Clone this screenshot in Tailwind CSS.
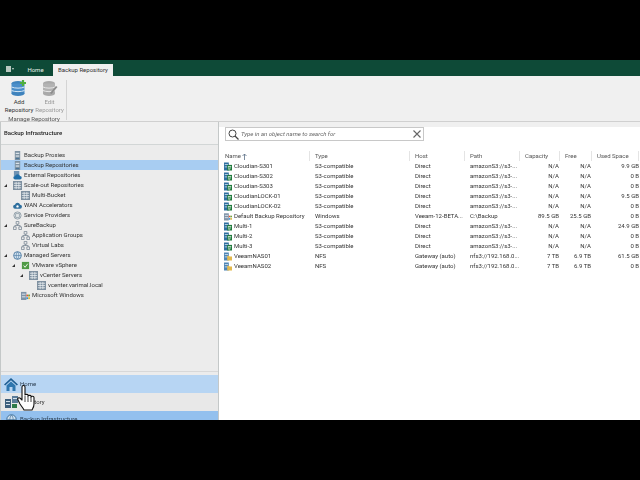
<!DOCTYPE html>
<html lang="en">
<head>
<meta charset="UTF-8">
<title>Backup Repository</title>
<script src="https://cdn.jsdelivr.net/npm/@tailwindcss/browser@4"></script>
</head>
<body class="bg-black overflow-hidden">
<svg class="hidden">
  <symbol id="s3" viewBox="0 0 10 10"><rect x="0" y="0" width="6" height="10" fill="#2f6f9f"/><rect x="1" y="2" width="4" height="1" fill="#cfe3f2"/><rect x="1" y="5" width="4" height="1" fill="#cfe3f2"/><rect x="4" y="3" width="6" height="7" fill="#1f7a3c"/><path d="M5 5h4M6 5v4M8 6l-1 3" stroke="#e4f5e6" stroke-width="0.9" fill="none"/></symbol>
  <symbol id="win" viewBox="0 0 10 10"><rect x="0" y="1" width="6" height="9" fill="#7f93a8"/><rect x="1" y="3" width="4" height="1" fill="#e6edf3"/><rect x="1" y="6" width="4" height="1" fill="#e6edf3"/><rect x="6" y="4" width="2" height="2" fill="#e0562f"/><rect x="8" y="4" width="2" height="2" fill="#6aa842"/><rect x="6" y="7" width="2" height="2" fill="#2f8fd6"/><rect x="8" y="7" width="2" height="2" fill="#e8b830"/></symbol>
  <symbol id="nas" viewBox="0 0 10 10"><rect x="0" y="0" width="6" height="10" fill="#4f86b5"/><rect x="1" y="2" width="4" height="1" fill="#d8e8f4"/><rect x="1" y="5" width="4" height="1" fill="#d8e8f4"/><path d="M4 4h2l1 1h3v5H4z" fill="#e3b94c"/></symbol>
  <symbol id="srv" viewBox="0 0 10 10"><rect x="2" y="0" width="6" height="10" fill="#7f93a3"/><rect x="3" y="2" width="4" height="1.200" fill="#e8eef3"/><rect x="3" y="5" width="4" height="1.200" fill="#e8eef3"/><rect x="3" y="8" width="4" height="1" fill="#3d6d94"/></symbol>
  <symbol id="grid" viewBox="0 0 10 10"><rect x="0" y="0" width="10" height="10" fill="#7d8f9f"/><path d="M1 2.500h8M1 5h8M1 7.500h8M3.500 1v8M6.500 1v8" stroke="#eef2f5" stroke-width="0.8"/></symbol>
  <symbol id="net" viewBox="0 0 10 10"><path d="M3.500 .5h3v3h-3zM.5 6.500h3v3h-3zM6.500 6.500h3v3h-3zM5 3.500v1.500M2 6.500V5h6v1.500" fill="none" stroke="#6f7f8d" stroke-width="0.8"/></symbol>
  <symbol id="cloud" viewBox="0 0 10 10"><path d="M2.500 8.500a2.200 2.200 0 0 1-.3-4.400 3 3 0 0 1 5.700 0 2.200 2.200 0 0 1-.3 4.400z" fill="#2e6f9e"/><circle cx="5" cy="6" r="1.300" fill="#fff"/></symbol>
  <symbol id="ext" viewBox="0 0 10 10"><rect x="1" y="0" width="6" height="6" fill="#6f93b3"/><path d="M2.500 9.500a2 2 0 0 1-.2-4 3 3 0 0 1 5.500 0 2 2 0 0 1-.2 4z" fill="#1f6ea8"/></symbol>
  <symbol id="globe" viewBox="0 0 10 10"><circle cx="5" cy="5" r="4.300" fill="#cfe0ee" stroke="#3f709a" stroke-width="0.9"/><path d="M1 5h8M5 1c-2 2-2 6 0 8M5 1c2 2 2 6 0 8" stroke="#3f709a" stroke-width="0.6" fill="none"/></symbol>
  <symbol id="ring" viewBox="0 0 10 10"><circle cx="5" cy="5" r="4" fill="#e4e8ea" stroke="#84949f" stroke-width="0.9"/><rect x="3" y="3" width="4" height="4" fill="none" stroke="#84949f" stroke-width="0.8"/></symbol>
  <symbol id="vs" viewBox="0 0 10 10"><rect x="1" y="1" width="8" height="8" fill="#4f9a45"/><path d="M3 5l1.500 2L7.500 3" stroke="#e8f4e4" stroke-width="1.100" fill="none"/></symbol>
</svg>

<div class="flex flex-col h-[480px] w-[640px] relative font-['Roboto',sans-serif] text-[6px] leading-[10px] text-[#333] blur-[0.25px]">
  <div class="h-[60px] shrink-0"></div>

  <!-- title strip with tabs -->
  <div class="h-[16px] shrink-0 bg-[#0e4a37] flex items-end pl-[4px]">
    <div class="w-[14px] h-[12px] flex items-center gap-[1px] pl-[2px] mb-[1px]">
      <div class="w-[5px] h-[6px] bg-[#b9c9c0]"></div>
      <div class="w-0 h-0 border-l-[1.5px] border-r-[1.5px] border-t-[2px] border-l-transparent border-r-transparent border-t-[#cdd8d2]"></div>
    </div>
    <div class="w-[35px] h-[12px] text-center text-[#e6efe9] leading-[12px]">Home</div>
    <div class="w-[60px] h-[12px] text-center bg-[#f0f0f0] leading-[12px]">Backup Repository</div>
  </div>

  <!-- ribbon -->
  <div class="h-[46px] shrink-0 bg-[#f0f0f0] border-b border-[#d0d0d0] flex pl-[2px]">
    <div class="w-[64px] flex flex-col items-center">
      <div class="flex">
        <div class="w-[31px] flex flex-col items-center pt-[4px] text-center leading-[8px]">
          <svg width="16" height="17" viewBox="0 0 16 17"><ellipse cx="7" cy="3.500" rx="6.500" ry="2.500" fill="#3f83bd"/><rect x=".5" y="3.500" width="13" height="10" fill="#4b8fca"/><ellipse cx="7" cy="13.500" rx="6.500" ry="2.500" fill="#3f83bd"/><path d="M.5 7c3 1.500 10 1.500 13 0M.5 10.500c3 1.500 10 1.500 13 0" stroke="#d5e6f4" stroke-width="1" fill="none"/><path d="M12 0v6M9 3h6" stroke="#4fae3e" stroke-width="2.200"/></svg>
          <div class="mt-[1px]">Add</div>
          <div>Repository</div>
        </div>
        <div class="w-[30px] flex flex-col items-center pt-[4px] text-center leading-[8px] text-[#9a9a9a]">
          <svg width="16" height="17" viewBox="0 0 16 17"><ellipse cx="7" cy="3.500" rx="6" ry="2.500" fill="#a9a9a9"/><rect x="1" y="3.500" width="12" height="10" fill="#b3b3b3"/><ellipse cx="7" cy="13.500" rx="6" ry="2.500" fill="#a9a9a9"/><path d="M1 7c3 1.500 9 1.500 12 0M1 10.500c3 1.500 9 1.500 12 0" stroke="#e6e6e6" stroke-width="1" fill="none"/><path d="M8 13l6-7 1.500 1-6 7z" fill="#8c8c8c"/></svg>
          <div class="mt-[1px]">Edit</div>
          <div>Repository</div>
        </div>
      </div>
      <div class="leading-[9px] text-[#555]">Manage Repository</div>
    </div>
    <div class="w-px h-[40px] mt-[4px] bg-[#d4d4d4]"></div>
  </div>

  <!-- main -->
  <div class="flex-1 flex min-h-0">
    <div class="w-[219px] shrink-0 bg-[#ececec] border-l border-r border-[#c4c8c8] flex flex-col">
      <div class="h-[23px] shrink-0 border-b border-[#d2d6d6] bg-[#f0f0f0] pl-[3px] pt-[6px] font-medium text-[#222]">Backup Infrastructure</div>
      <div id="treeList" class="pt-[5px] flex-1"></div>
      <div class="h-px bg-[#d8d8d8] mb-[3px]"></div>
      <div class="h-[18px] shrink-0 bg-[#b7d5f3] flex items-center pl-[3px] gap-[2px]">
        <svg width="14" height="13" viewBox="0 0 14 13"><path d="M7 0L0 6.500l1.200 1L7 2.300l5.800 5.200 1.200-1z" fill="#1f5f93"/><path d="M2.500 7.500L7 3.500l4.500 4V13H8.500V9h-3v4h-3z" fill="#2e76ae"/></svg>
        <span class="text-[#2b3d4f]">Home</span>
      </div>
      <div class="h-[18px] shrink-0 bg-[#e8e8e8] flex items-center pl-[4px] gap-[2px]">
        <svg width="13" height="13" viewBox="0 0 13 13"><rect x="0" y="3" width="6" height="9" fill="#3d5f7d"/><rect x="1" y="5" width="4" height="1" fill="#d5e2ec"/><rect x="1" y="8" width="4" height="1" fill="#d5e2ec"/><rect x="7" y="0" width="6" height="7" fill="#5b7c99"/><rect x="8" y="2" width="4" height="1" fill="#d5e2ec"/><rect x="7" y="8" width="5" height="4" fill="#2f7a4a"/></svg>
        <span>Inventory</span>
      </div>
      <div class="h-[9px] shrink-0 bg-[#93c0ee] flex pl-[5px] gap-[3px] pt-[3px] overflow-hidden">
        <svg class="shrink-0" width="11" height="11"><use href="#globe"/></svg>
        <span class="text-[#2b3d4f]">Backup Infrastructure</span>
      </div>
    </div>

    <div class="flex-1 bg-white flex flex-col min-w-0">
      <div class="h-[5px] shrink-0 bg-[#f0f0f0] -mb-[3px]"></div>
      <div class="mx-[6px] mt-[3px] w-[199px] h-[14px] bg-white border border-[#c8c8c8] flex items-center pl-[2px] pr-[2px] shrink-0">
        <svg width="11" height="11" viewBox="0 0 11 11"><circle cx="4.500" cy="4.500" r="3.500" fill="none" stroke="#444" stroke-width="1"/><path d="M7 7l3.500 3.500" stroke="#444" stroke-width="1.300"/></svg>
        <span class="ml-[2px] italic text-[#666] flex-1">Type in an object name to search for</span>
        <svg width="8" height="8" viewBox="0 0 8 8"><path d="M.5.5l7 7M7.500.5l-7 7" stroke="#666" stroke-width="1.100"/></svg>
      </div>
      <div class="mt-[10px] pl-[6px] text-[#555] grid grid-cols-[85px_100px_55px_55px_40px_32px_47px] h-[10px] shrink-0">
        <div class="flex items-center gap-[1px] border-r border-[#e4e4e4]">Name <svg width="5" height="7" viewBox="0 0 5 7"><path d="M2.500 7V1M.5 3l2-2 2 2" stroke="#5a6f85" stroke-width=".8" fill="none"/></svg></div>
        <div class="pl-[5px] border-r border-[#e4e4e4]">Type</div>
        <div class="pl-[5px] border-r border-[#e4e4e4]">Host</div>
        <div class="pl-[5px] border-r border-[#e4e4e4]">Path</div>
        <div class="pl-[5px] border-r border-[#e4e4e4]">Capacity</div>
        <div class="pl-[5px] border-r border-[#e4e4e4]">Free</div>
        <div class="pl-[5px] border-r border-[#e4e4e4]">Used Space</div>
      </div>
      <div id="rows" class="pl-[6px]"></div>
    </div>
  </div>

  <div class="h-[60px] shrink-0 bg-black relative z-10"></div>

  <!-- mouse cursor -->
  <svg class="absolute left-[17px] top-[385px] z-20" width="20" height="26" viewBox="0 0 20 26"><path d="M5 2c0-2 3-2 3 0v8c0-1 3-1 3 0v1c0-1 3-1 3 0v1c0-1 3-1 3 .5V19c0 3-1 4-2 6H7c-1-2-2-3-4-6L1 15c-1-2 1-3 2.500-1.500L5 15z" fill="#fff" stroke="#111" stroke-width="1.100" stroke-linejoin="round"/><path d="M8 11v6M11 11v6M14 12v5" stroke="#111" stroke-width=".8"/></svg>
</div>

<script>
  const treeItems = [
    ['Backup Proxies', 'srv', 0, false],
    ['Backup Repositories', 'srv', 0, false, true],
    ['External Repositories', 'ext', 0, false],
    ['Scale-out Repositories', 'grid', 0, true],
    ['Multi-Bucket', 'grid', 1, false],
    ['WAN Accelerators', 'cloud', 0, false],
    ['Service Providers', 'ring', 0, false],
    ['SureBackup', 'net', 0, true],
    ['Application Groups', 'net', 1, false],
    ['Virtual Labs', 'net', 1, false],
    ['Managed Servers', 'globe', 0, true],
    ['VMware vSphere', 'vs', 1, true],
    ['vCenter Servers', 'grid', 2, true],
    ['vcenter.varimal.local', 'grid', 3, false],
    ['Microsoft Windows', 'win', 1, false],
  ];
  document.getElementById('treeList').innerHTML = treeItems.map(([label, icon, depth, open, sel]) => `
    <div class="h-[10px] flex items-center ${sel ? 'bg-[#a8cdf2]' : ''}" style="padding-left:${depth * 8}px">
      <div class="w-[8px] mr-[4px] shrink-0 flex justify-center">${open ? '<div class="w-0 h-0 border-l-[3px] border-l-transparent border-b-[3px] border-b-[#333]"></div>' : ''}</div>
      <svg class="shrink-0 mr-[2px]" width="9" height="9"><use href="#${icon}"/></svg>
      <span class="whitespace-nowrap">${label}</span>
    </div>`).join('');

  const repoRows = [
    ['s3', 'Cloudian-S301', 'S3-compatible', 'Direct', 'amazonS3://s3-...', 'N/A', 'N/A', '9.9 GB'],
    ['s3', 'Cloudian-S302', 'S3-compatible', 'Direct', 'amazonS3://s3-...', 'N/A', 'N/A', '0 B'],
    ['s3', 'Cloudian-S303', 'S3-compatible', 'Direct', 'amazonS3://s3-...', 'N/A', 'N/A', '0 B'],
    ['s3', 'CloudianLOCK-01', 'S3-compatible', 'Direct', 'amazonS3://s3-...', 'N/A', 'N/A', '9.5 GB'],
    ['s3', 'CloudianLOCK-02', 'S3-compatible', 'Direct', 'amazonS3://s3-...', 'N/A', 'N/A', '0 B'],
    ['win', 'Default Backup Repository', 'Windows', 'Veeam-12-BETA...', 'C:\\Backup', '89.5 GB', '25.5 GB', '0 B'],
    ['s3', 'Multi-1', 'S3-compatible', 'Direct', 'amazonS3://s3-...', 'N/A', 'N/A', '24.9 GB'],
    ['s3', 'Multi-2', 'S3-compatible', 'Direct', 'amazonS3://s3-...', 'N/A', 'N/A', '0 B'],
    ['s3', 'Multi-3', 'S3-compatible', 'Direct', 'amazonS3://s3-...', 'N/A', 'N/A', '0 B'],
    ['nas', 'VeeamNAS01', 'NFS', 'Gateway (auto)', 'nfs3://192.168.0...', '7 TB', '6.9 TB', '61.5 GB'],
    ['nas', 'VeeamNAS02', 'NFS', 'Gateway (auto)', 'nfs3://192.168.0...', '7 TB', '6.9 TB', '0 B'],
  ];
  document.getElementById('rows').innerHTML = repoRows.map(([icon, name, type, host, path, cap, free, used]) => `
    <div class="grid grid-cols-[85px_100px_55px_55px_40px_32px_47px] h-[10px] whitespace-nowrap">
      <div class="flex items-center gap-[2px] -ml-[1px]"><svg class="shrink-0" width="8" height="9"><use href="#${icon}"/></svg>${name}</div>
      <div class="pl-[5px]">${type}</div>
      <div class="pl-[5px]">${host}</div>
      <div class="pl-[5px]">${path}</div>
      <div class="text-right pr-[1px]">${cap}</div>
      <div class="text-right pr-[1px]">${free}</div>
      <div class="text-right">${used}</div>
    </div>`).join('');
</script>
</body>
</html>
